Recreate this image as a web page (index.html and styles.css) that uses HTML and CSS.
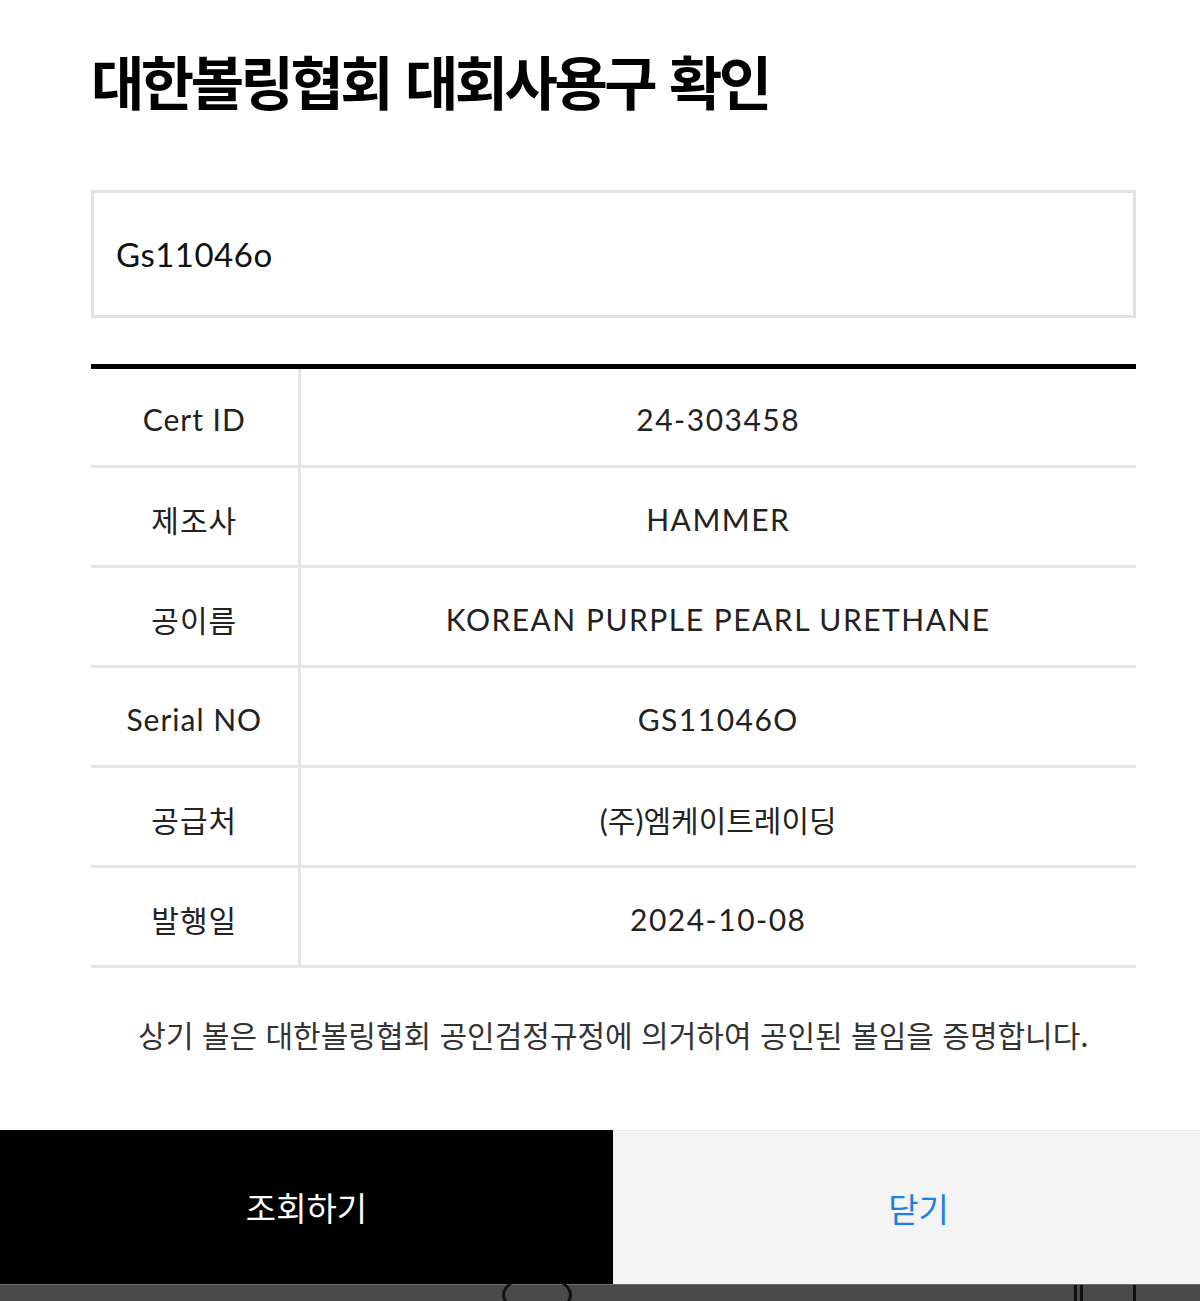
FILE: index.html
```html
<!DOCTYPE html>
<html lang="ko">
<head>
<meta charset="utf-8">
<link rel="stylesheet" href="styles.css">
</head>
<body>
<div class="sheet">
  <div class="content">
    <h1 class="title">대한볼링협회 대회사용구 확인</h1>
    <div class="search">Gs11046o</div>
    <table class="info">
      <tr><th>Cert ID</th><td>24-303458</td></tr>
      <tr><th>제조사</th><td>HAMMER</td></tr>
      <tr><th>공이름</th><td>KOREAN PURPLE PEARL URETHANE</td></tr>
      <tr><th>Serial NO</th><td>GS11046O</td></tr>
      <tr><th>공급처</th><td class="ko">(주)엠케이트레이딩</td></tr>
      <tr><th>발행일</th><td>2024-10-08</td></tr>
    </table>
    <p class="note">상기 볼은 대한볼링협회 공인검정규정에 의거하여 공인된 볼임을 증명합니다.</p>
  </div>
  <div class="actions">
    <button class="btn btn-primary">조회하기</button>
    <button class="btn btn-close">닫기</button>
  </div>
</div>
<div class="underlay">
  <span class="u-ring"></span>
  <span class="u-bar u-bar1"></span>
  <span class="u-bar u-bar2"></span>
  <span class="u-bar u-bar3"></span>
</div>
</body>
</html>
```
FILE: styles.css
```css
* { box-sizing: border-box; }
html, body { margin: 0; padding: 0; background: #ffffff; }
body {
  width: 1200px;
  height: 1301px;
  overflow: hidden;
  font-family: "Lato", "Noto Sans CJK KR", sans-serif;
  color: #222;
}
.sheet {
  height: 1284px;
  display: flex;
  flex-direction: column;
  background: #fff;
}
.content {
  flex: 1;
  padding: 0 64px 0 91px;
}
.title {
  margin: 0;
  padding-top: 44px;
  height: 190px;
  font-family: "Noto Sans CJK KR", sans-serif;
  font-weight: 700;
  font-size: 58px;
  line-height: 72px;
  letter-spacing: -3.5px;
  word-spacing: 2px;
  color: #000;
}
.search {
  height: 128px;
  border: 3px solid #e2e2e2;
  padding-left: 22px;
  display: flex;
  align-items: center;
  font-size: 33px;
  color: #111;
  letter-spacing: 0.5px;
}
.info {
  width: 100%;
  margin-top: 46px;
  border-collapse: collapse;
  border-top: 5px solid #000;
}
.info th, .info td {
  height: 100px;
  border-bottom: 3px solid #e6e6e6;
  font-weight: 400;
  font-size: 30px;
  color: #222;
  text-align: center;
  padding: 4px 0 0;
}
.info th {
  width: 208px;
  border-right: 3px solid #e6e6e6;
  letter-spacing: 1px;
}
.info td { letter-spacing: 1.5px; }
.info td.ko { letter-spacing: 0; }
.note {
  margin: 44px 0 0;
  text-align: center;
  font-family: "Noto Sans CJK KR", sans-serif;
  font-size: 30px;
  letter-spacing: 0;
  color: #333;
}
.actions {
  height: 154px;
  display: flex;
}
.btn {
  border: 0;
  margin: 0;
  font-family: "Noto Sans CJK KR", sans-serif;
  font-size: 33px;
  letter-spacing: 0;
}
.btn-primary {
  width: 613px;
  background: #000;
  color: #fff;
}
.btn-close {
  flex: 1;
  background: #f4f4f4;
  color: #1a7fe8;
  border-top: 1px solid #e8e8e8;
  padding-left: 30px;
}
.underlay {
  position: relative;
  height: 17px;
  background: #4a4a4a;
  border-top: 1px solid #6a6a6a;
}
.u-ring {
  position: absolute;
  left: 502px;
  top: -10px;
  width: 70px;
  height: 40px;
  border: 3px solid #111;
  border-top-color: transparent;
  border-radius: 50%;
}
.u-bar {
  position: absolute;
  top: 0;
  width: 3px;
  height: 17px;
  background: #111;
}
.u-bar1 { left: 1074px; }
.u-bar2 { left: 1080px; }
.u-bar3 { left: 1133px; }
```
